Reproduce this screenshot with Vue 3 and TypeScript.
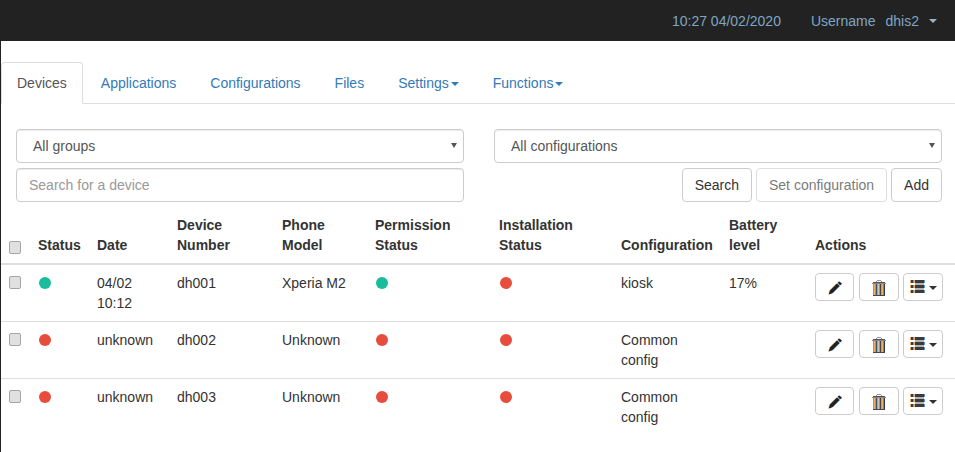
<script setup lang="ts">
interface Row {
  status: string
  date: string[]
  number: string
  model: string
  permission: string
  installation: string
  config: string[]
  battery: string
}
const tabs = ['Applications', 'Configurations', 'Files']
const rows: Row[] = [
  { status: 'ok', date: ['04/02', '10:12'], number: 'dh001', model: 'Xperia M2', permission: 'ok', installation: 'bad', config: ['kiosk'], battery: '17%' },
  { status: 'bad', date: ['unknown'], number: 'dh002', model: 'Unknown', permission: 'bad', installation: 'bad', config: ['Common', 'config'], battery: '' },
  { status: 'bad', date: ['unknown'], number: 'dh003', model: 'Unknown', permission: 'bad', installation: 'bad', config: ['Common', 'config'], battery: '' }
]
const pencil = 'M11.2 0.4l2.4 2.4-1.4 1.4-2.4-2.4zM9 2.6l2.4 2.4-7 7-3.6 1.4 1.2-3.8z'
const trashStripes = [
  { x: 1, c: '#d08a3a' }, { x: 2, c: '#f0ae62' }, { x: 3, c: '#62a6e0' }, { x: 4, c: '#33546f' },
  { x: 5, c: '#e3994a' }, { x: 6, c: '#d2c6b2' }, { x: 7, c: '#62a6e0' }, { x: 8, c: '#4a4440' },
  { x: 9, c: '#e3994a' }, { x: 10, c: '#f0ae62' }, { x: 11, c: '#4f8fd2' }, { x: 12, c: '#1f3f66' }
]
</script>

<template>
  <div class="page">
    <header class="navbar">
      <span class="clock">10:27 04/02/2020</span>
      <span class="user">Username</span>
      <span class="login">dhis2</span>
      <span class="caret nav-caret"></span>
    </header>

    <ul class="tabs">
      <li class="tab active"><a>Devices</a></li>
      <li v-for="t in tabs" :key="t" class="tab"><a>{{ t }}</a></li>
      <li class="tab"><a>Settings<span class="caret link-caret"></span></a></li>
      <li class="tab"><a>Functions<span class="caret link-caret"></span></a></li>
    </ul>

    <div class="filters">
      <div class="col">
        <div class="select-wrap"><select class="control select"><option>All groups</option></select></div>
        <input class="control" placeholder="Search for a device" />
      </div>
      <div class="col">
        <div class="select-wrap"><select class="control select"><option>All configurations</option></select></div>
        <div class="buttons">
          <button class="btn">Search</button>
          <button class="btn disabled">Set configuration</button>
          <button class="btn">Add</button>
        </div>
      </div>
    </div>

    <table class="devices">
      <colgroup>
        <col style="width: 29px" />
        <col style="width: 59px" />
        <col style="width: 80px" />
        <col style="width: 105px" />
        <col style="width: 93px" />
        <col style="width: 124px" />
        <col style="width: 122px" />
        <col style="width: 108px" />
        <col style="width: 86px" />
        <col />
      </colgroup>
      <thead>
        <tr>
          <th class="check-cell"><input type="checkbox" class="check" /></th>
          <th>Status</th>
          <th>Date</th>
          <th>Device<br />Number</th>
          <th>Phone<br />Model</th>
          <th>Permission<br />Status</th>
          <th>Installation<br />Status</th>
          <th>Configuration</th>
          <th>Battery<br />level</th>
          <th>Actions</th>
        </tr>
      </thead>
      <tbody>
        <tr v-for="r in rows" :key="r.number">
          <td class="check-cell"><input type="checkbox" class="check" /></td>
          <td><span class="dot" :class="r.status"></span></td>
          <td><template v-for="(l, i) in r.date" :key="i"><br v-if="i" />{{ l }}</template></td>
          <td>{{ r.number }}</td>
          <td>{{ r.model }}</td>
          <td><span class="dot" :class="r.permission"></span></td>
          <td><span class="dot" :class="r.installation"></span></td>
          <td><template v-for="(l, i) in r.config" :key="i"><br v-if="i" />{{ l }}</template></td>
          <td>{{ r.battery }}</td>
          <td>
            <div class="actions">
              <button class="act">
                <svg class="icon-pencil" width="14" height="14" viewBox="0 0 14 14">
                  <path fill="#e8a04c" transform="translate(-0.6 0)" :d="pencil" />
                  <path fill="#3f8ad6" transform="translate(0.6 0)" :d="pencil" />
                  <path fill="#222" :d="pencil" />
                </svg>
              </button>
              <button class="act">
                <svg class="icon-trash" width="14" height="16" viewBox="0 0 14 16" shape-rendering="crispEdges">
                  <rect x="5" y="0" width="4" height="1" fill="#999" />
                  <rect x="4" y="1" width="1" height="1" fill="#888" />
                  <rect x="9" y="1" width="1" height="1" fill="#888" />
                  <rect x="1" y="2" width="12" height="1" fill="#555" />
                  <rect x="0" y="3" width="14" height="1" fill="#888" />
                  <rect v-for="s in trashStripes" :key="s.x" :x="s.x" y="4" width="1" height="11" :fill="s.c" />
                  <rect x="1" y="15" width="12" height="1" fill="#3c4a58" />
                </svg>
              </button>
              <button class="act">
                <svg class="icon-list" width="15" height="14" viewBox="0 0 15 14" shape-rendering="crispEdges">
                  <g v-for="y in [0, 5, 10]" :key="y">
                    <rect x="0" :y="y" width="1" height="3" fill="#e8a860" />
                    <rect x="1" :y="y" width="2" height="3" fill="#3a3a3a" />
                    <rect x="3" :y="y" width="1" height="3" fill="#5a9ad8" />
                    <rect x="4" :y="y" width="1" height="3" fill="#e0b07c" />
                    <rect x="5" :y="y" width="9" height="3" fill="#3a3a3a" />
                    <rect x="14" :y="y" width="1" height="3" fill="#5a9ad8" />
                  </g>
                  <g v-for="y in [3, 8]" :key="y">
                    <rect x="5" :y="y" width="9" height="2" fill="#b4b4b4" />
                  </g>
                </svg>
                <span class="caret act-caret"></span>
              </button>
            </div>
          </td>
        </tr>
      </tbody>
    </table>
  </div>
</template>

<style scoped>
.page {
  height: 452px;
  overflow: hidden;
  box-sizing: border-box;
  border-left: 1px solid #222;
  background: #fff;
  color: #333;
  font-family: "Liberation Sans", Arial, sans-serif;
  font-size: 14px;
  line-height: 20px;
}
.navbar {
  height: 41px;
  margin-left: -1px;
  background: #222;
  color: #7ea6c4;
  display: flex;
  align-items: center;
  justify-content: flex-end;
  padding-right: 18px;
}
.clock { margin-right: 30px; }
.user { margin-right: 10px; }
.caret {
  display: inline-block;
  width: 0;
  height: 0;
  border-top: 4px solid currentColor;
  border-left: 4px solid transparent;
  border-right: 4px solid transparent;
  vertical-align: middle;
}
.nav-caret { margin-left: 10px; color: #a3b1bd; }
.link-caret { margin-left: 2px; }
.tabs {
  list-style: none;
  margin: 21px 0 0;
  padding: 0;
  display: flex;
  height: 42px;
  box-sizing: border-box;
  border-bottom: 1px solid #ddd;
}
.tab {
  margin-right: 2px;
  margin-bottom: -1px;
}
.tab a {
  display: block;
  padding: 10px 15px;
  border: 1px solid transparent;
  border-radius: 4px 4px 0 0;
  color: #337ab7;
}
.tab.active a {
  color: #555;
  background: #fff;
  border-color: #ddd #ddd #fff;
}
.filters {
  display: flex;
  gap: 30px;
  padding: 25px 13px 0 15px;
}
.col {
  width: 448px;
  display: flex;
  flex-direction: column;
  gap: 5px;
}
.control {
  box-sizing: border-box;
  width: 100%;
  height: 34px;
  padding: 6px 12px;
  background: #fff;
  color: #555;
  border: 1px solid #ccc;
  border-radius: 4px;
  box-shadow: inset 0 1px 1px rgba(0, 0, 0, 0.075);
  font: inherit;
}
.control::placeholder { color: #999; }
.select-wrap { position: relative; height: 34px; }
.select-wrap::after {
  content: "";
  position: absolute;
  right: 7px;
  top: 14px;
  border-top: 5px solid #555;
  border-left: 3px solid transparent;
  border-right: 3px solid transparent;
  pointer-events: none;
}
.select {
  appearance: none;
  padding-left: 16px;
}
.buttons {
  display: flex;
  justify-content: flex-end;
  gap: 4px;
}
.btn {
  height: 34px;
  padding: 6px 12px;
  background: #fff;
  color: #333;
  border: 1px solid #ccc;
  border-radius: 4px;
  font: inherit;
}
.btn.disabled { opacity: 0.65; }
.devices {
  table-layout: fixed;
  width: 954px;
  margin-top: 5px;
  border-collapse: collapse;
}
th, td {
  padding: 8px;
  text-align: left;
  vertical-align: top;
}
th {
  vertical-align: bottom;
  font-weight: 700;
  border-bottom: 2px solid #ddd;
}
td { border-bottom: 1px solid #ddd; }
tbody tr:last-child td { border-bottom: 0; }
.check-cell { padding: 8px 0 8px 8px; }
.check {
  appearance: none;
  display: block;
  box-sizing: border-box;
  width: 12px;
  height: 13px;
  margin: 3px 0 0;
  border: 1px solid #a5a5a5;
  border-radius: 2px;
  background: #e0e0e0;
}
th .check { margin-bottom: 1px; }
.dot {
  display: block;
  width: 12px;
  height: 12px;
  margin: 4px 0 0 1px;
  border-radius: 50%;
}
.dot.ok { background: #1abc9c; }
.dot.bad { background: #e74c3c; }
.actions {
  display: flex;
  gap: 4px;
}
.act {
  box-sizing: border-box;
  width: 40px;
  height: 28px;
  padding: 0;
  background: #fff;
  border: 1px solid #ccc;
  border-radius: 4px;
  display: flex;
  align-items: center;
  justify-content: center;
  color: #333;
}
.act:first-child { width: 39px; margin-right: 1px; }
.icon-pencil { margin: 2px 0 0 1px; }
.icon-trash { margin-top: 1px; }
.act-caret { margin-left: 4px; margin-top: 1px; }
</style>

<style>
html, body { background: #fff; }
</style>
